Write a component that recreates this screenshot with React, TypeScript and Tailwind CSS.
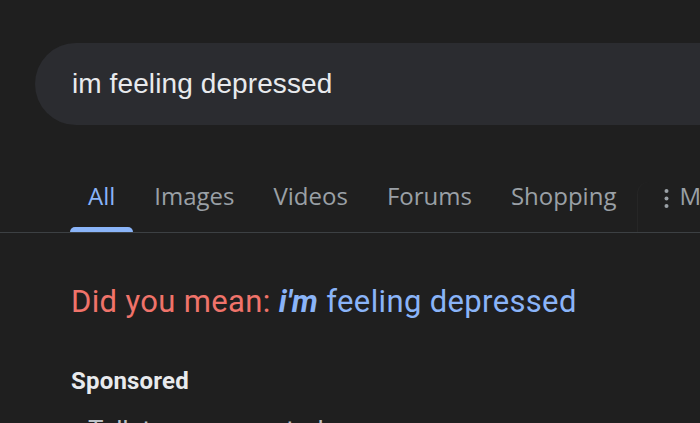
import React from "react";

const tabs = ["All", "Images", "Videos", "Forums", "Shopping"];

const App = () => {
  return (
    <div className="h-[423px] w-[700px] overflow-hidden bg-[#1f1f1f]">
      {/* Search box */}
      <div className="ml-[35px] mt-[43px] flex h-[82px] w-[720px] items-center rounded-l-full bg-[#2b2c30] pl-[37px]">
        <span
          className="text-[28px] leading-[32px] tracking-[0.1px] text-[#e8eaed]"
          style={{ fontFamily: '"Liberation Sans", Arial, sans-serif' }}
        >
          im feeling depressed
        </span>
      </div>

      {/* Tabs */}
      <nav
        className="mt-[57px] flex border-b border-[#3c4043] pl-[70px] whitespace-nowrap"
        style={{ fontFamily: '"Open Sans", Roboto, sans-serif' }}
      >
        {tabs.map((t, i) => (
          <div key={t} className="mr-[3px] flex flex-col">
            <span
              className={`px-[18px] text-[24px] leading-[28px] ${
                i === 0 ? "text-[#8ab4f8]" : "text-[#9aa0a6]"
              }`}
            >
              {t}
            </span>
            <div
              className={`mt-[17px] h-[5px] rounded-t-full ${
                i === 0 ? "bg-[#8ab4f8]" : "bg-transparent"
              }`}
            />
          </div>
        ))}
        <div className="flex h-[50px] items-start rounded-tl-xl border-l border-[#262626] pl-[26px]">
          <div className="flex h-[28px] items-center">
            <svg width="5" height="22" viewBox="0 0 5 22" className="mt-[5px]">
              <circle cx="2.5" cy="3" r="2" fill="#9aa0a6" />
              <circle cx="2.5" cy="10.5" r="2" fill="#9aa0a6" />
              <circle cx="2.5" cy="18" r="2" fill="#9aa0a6" />
            </svg>
            <span className="ml-[10px] text-[24px] leading-[28px] text-[#9aa0a6]">More</span>
          </div>
        </div>
      </nav>

      {/* Spelling suggestion */}
      <p
        className="ml-[71px] mt-[51px] whitespace-nowrap text-[31px] leading-[36px] tracking-[0.35px]"
        style={{ fontFamily: "Roboto, Arial, sans-serif" }}
      >
        <span className="text-[#f0736a]">Did you mean: </span>
        <span className="font-bold italic text-[#8ab4f8]">i'm</span>
        <span className="text-[#8ab4f8]"> feeling depressed</span>
      </p>

      <p
        className="ml-[71px] mt-[47px] text-[24px] font-bold leading-[28px] tracking-[0.2px] text-[#e8eaed]"
        style={{ fontFamily: "Roboto, Arial, sans-serif" }}
      >
        Sponsored
      </p>

      <p
        className="ml-[88px] mt-[20px] whitespace-nowrap text-[26px] leading-[30px] text-[#bdc1c6]"
        style={{ fontFamily: "Roboto, Arial, sans-serif" }}
      >
        Talk to someone today
      </p>
    </div>
  );
};

export default App;
